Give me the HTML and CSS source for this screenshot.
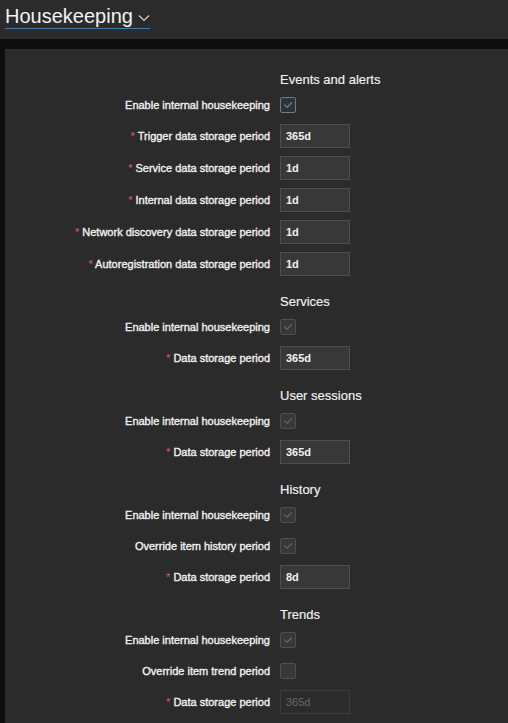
FILE: index.html
```html
<!DOCTYPE html>
<html lang="en">
  <head>
    <meta name="viewport" content="width=device-width">
    <title>Housekeeping</title>
    <link rel="stylesheet" href="styles.css">
  </head>
  <body>
    <header class="page-header">
      <h1 class="page-title">Housekeeping
        <svg class="chevron" width="12" height="8" viewBox="0 0 12 8"><path d="M1 1.5 L6 6.5 L11 1.5" fill="none" stroke="#cfcfcf" stroke-width="1.2"/></svg>
      </h1>
    </header>
    <main class="wrapper">
      <form class="form">
        <div class="section-title">Events and alerts</div>
        <div class="row row-check">
          <label class="label">Enable internal housekeeping</label>
          <span class="check is-on"><svg viewBox="0 0 16 16"><path d="M3.5 7.5 L7 10.5 L12.5 5" fill="none" stroke-width="1.2"/></svg></span>
        </div>
        <div class="row">
          <label class="label"><span class="req">*</span> Trigger data storage period</label>
          <input class="text" type="text" value="365d">
        </div>
        <div class="row">
          <label class="label"><span class="req">*</span> Service data storage period</label>
          <input class="text" type="text" value="1d">
        </div>
        <div class="row">
          <label class="label"><span class="req">*</span> Internal data storage period</label>
          <input class="text" type="text" value="1d">
        </div>
        <div class="row">
          <label class="label"><span class="req">*</span> Network discovery data storage period</label>
          <input class="text" type="text" value="1d">
        </div>
        <div class="row">
          <label class="label"><span class="req">*</span> Autoregistration data storage period</label>
          <input class="text" type="text" value="1d">
        </div>

        <div class="section-title">Services</div>
        <div class="row row-check">
          <label class="label">Enable internal housekeeping</label>
          <span class="check is-dim"><svg viewBox="0 0 16 16"><path d="M3.5 7.5 L7 10.5 L12.5 5" fill="none" stroke-width="1.2"/></svg></span>
        </div>
        <div class="row">
          <label class="label"><span class="req">*</span> Data storage period</label>
          <input class="text" type="text" value="365d">
        </div>

        <div class="section-title">User sessions</div>
        <div class="row row-check">
          <label class="label">Enable internal housekeeping</label>
          <span class="check is-dim"><svg viewBox="0 0 16 16"><path d="M3.5 7.5 L7 10.5 L12.5 5" fill="none" stroke-width="1.2"/></svg></span>
        </div>
        <div class="row">
          <label class="label"><span class="req">*</span> Data storage period</label>
          <input class="text" type="text" value="365d">
        </div>

        <div class="section-title">History</div>
        <div class="row row-check">
          <label class="label">Enable internal housekeeping</label>
          <span class="check is-dim"><svg viewBox="0 0 16 16"><path d="M3.5 7.5 L7 10.5 L12.5 5" fill="none" stroke-width="1.2"/></svg></span>
        </div>
        <div class="row row-check">
          <label class="label">Override item history period</label>
          <span class="check is-dim"><svg viewBox="0 0 16 16"><path d="M3.5 7.5 L7 10.5 L12.5 5" fill="none" stroke-width="1.2"/></svg></span>
        </div>
        <div class="row">
          <label class="label"><span class="req">*</span> Data storage period</label>
          <input class="text" type="text" value="8d">
        </div>

        <div class="section-title">Trends</div>
        <div class="row row-check">
          <label class="label">Enable internal housekeeping</label>
          <span class="check is-dim"><svg viewBox="0 0 16 16"><path d="M3.5 7.5 L7 10.5 L12.5 5" fill="none" stroke-width="1.2"/></svg></span>
        </div>
        <div class="row row-check">
          <label class="label">Override item trend period</label>
          <span class="check"></span>
        </div>
        <div class="row">
          <label class="label"><span class="req">*</span> Data storage period</label>
          <input class="text" type="text" value="365d" disabled>
        </div>
      </form>
    </main>
  </body>
</html>
```

FILE: styles.css
```css
* {
  margin: 0;
  padding: 0;
  box-sizing: border-box;
}
body {
  background-color: #0e0e0e;
  color: #f2f2f2;
  font-family: "Liberation Sans", Arial, sans-serif;
  font-size: 11px;
  overflow: hidden;
}

/* top bar with the page title */
.page-header {background-color: #2b2b2b; height: 39px; padding: 4px 0 0 5px;}
.page-title {
  display: inline-flex;
  align-items: center;
  gap: 5px;
  font-size: 20px;
  font-weight: normal;
  line-height: 24px;
  color: #f2f2f2;
  border-bottom: 1px solid #3f7fb0;
}
.chevron {margin-top: 4px;}

/* form panel */
.wrapper {background-color: #2b2b2b; margin: 10px 0 0 5px; padding: 23px 0 40px 0; min-height: 700px;}
.form {display: flex; flex-direction: column;}

.section-title {
  margin-left: 275px;
  padding-top: 10px;
  margin-bottom: 5px;
  font-size: 13px;
  line-height: 16px;
  color: #f2f2f2;
  -webkit-text-stroke: 0.15px #f2f2f2;
}
.form > .section-title:first-child {padding-top: 0;}

.row {display: flex; align-items: center; height: 24px; margin-bottom: 8px;}
.row-check {height: 23px;}
.label {
  width: 275px;
  padding-right: 10px;
  text-align: right;
  white-space: nowrap;
  -webkit-text-stroke: 0.35px #f2f2f2;
}
.req {color: #e45959; -webkit-text-stroke: 0;}

.text {
  width: 70px;
  height: 24px;
  padding: 0 5px;
  background-color: #383838;
  border: 1px solid #4f4f4f;
  color: #f2f2f2;
  font-family: "Liberation Sans", Arial, sans-serif;
  font-size: 11px;
  font-weight: bold;
  outline: none;
}
.text:disabled {background-color: #2b2b2b; border-color: #3c3c3c; color: #6a6a6a; font-weight: normal;}

/* checkboxes */
.check {
  display: inline-block;
  width: 16px;
  height: 16px;
  background-color: #383838;
  border: 1px solid #4f4f4f;
  border-radius: 2px;
}
.check svg {display: block; width: 14px; height: 14px;}
.check.is-on {border-color: #6a7d8c; background-color: #2f3236;}
.check.is-on path {stroke: #7b8b98;}
.check.is-dim path {stroke: #5f6b75;}
```
